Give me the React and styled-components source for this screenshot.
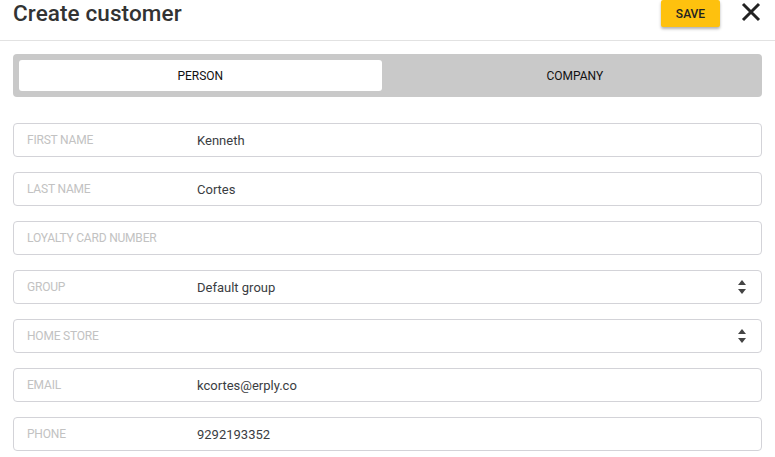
import React, { useState } from 'react'
import styled, { createGlobalStyle } from 'styled-components'

const GlobalStyle = createGlobalStyle`
  body {
    margin: 0;
    font-family: Roboto, 'Liberation Sans', sans-serif;
    background: #fff;
  }
`

const Page = styled.div`
  width: 775px;
`

const Header = styled.div`
  height: 40px;
  display: flex;
  align-items: flex-start;
  justify-content: space-between;
  padding: 0 13px;
  border-bottom: 1px solid #e2e2e2;
`

const Title = styled.h1`
  margin: 0;
  font-size: 22.5px;
  font-weight: 500;
  color: #333;
  letter-spacing: 0.1px;
`

const Actions = styled.div`
  display: flex;
  align-items: flex-start;
  gap: 20px;
`

const SaveButton = styled.button`
  width: 59px;
  height: 27px;
  border: none;
  border-radius: 2px;
  background: #fec10e;
  color: #222;
  font-family: inherit;
  font-size: 12px;
  font-weight: 500;
  box-shadow: 0 2px 3px rgba(0, 0, 0, 0.3);
  cursor: pointer;
`

const CloseButton = styled.button`
  border: none;
  background: transparent;
  padding: 0;
  margin-top: 1px;
  width: 22px;
  height: 22px;
  cursor: pointer;
`

const Content = styled.div`
  padding: 13px 13px 0;
`

const Tabs = styled.div`
  display: flex;
  gap: 12px;
  height: 43px;
  padding: 6px;
  box-sizing: border-box;
  background: #c9c9c9;
  border-radius: 4px;
  margin-bottom: 26px;
`

const Tab = styled.button`
  flex: 1;
  border: none;
  border-radius: 3px;
  background: ${p => (p.active ? '#fff' : 'transparent')};
  color: #111;
  font-family: inherit;
  font-size: 12px;
  cursor: pointer;
`

const Fields = styled.div`
  display: flex;
  flex-direction: column;
  gap: 15px;
`

const Field = styled.div`
  height: 34px;
  box-sizing: border-box;
  border: 1px solid #d3d3d8;
  border-radius: 4px;
  display: flex;
  align-items: center;
  padding: 0 14px 0 13px;
`

const Label = styled.span`
  width: 170px;
  flex-shrink: 0;
  font-size: 12px;
  color: #c2c2c2;
  letter-spacing: -0.2px;
`

const Value = styled.span`
  flex: 1;
  font-size: 13px;
  color: #3a3d42;
`

const Stepper = () => (
  <svg width="10" height="16" viewBox="0 0 10 16">
    <path d="M5 1 L9 6 L1 6 Z" fill="#444" />
    <path d="M1 10 L9 10 L5 15 Z" fill="#444" />
  </svg>
)

const fields = [
  { label: 'FIRST NAME', value: 'Kenneth' },
  { label: 'LAST NAME', value: 'Cortes' },
  { label: 'LOYALTY CARD NUMBER', value: '' },
  { label: 'GROUP', value: 'Default group', select: true },
  { label: 'HOME STORE', value: '', select: true },
  { label: 'EMAIL', value: 'kcortes@erply.co' },
  { label: 'PHONE', value: '9292193352' }
]

const App = () => {
  const [tab, setTab] = useState('person')
  return (
    <Page>
      <GlobalStyle />
      <Header>
        <Title>Create customer</Title>
        <Actions>
          <SaveButton>SAVE</SaveButton>
          <CloseButton aria-label='close'>
            <svg width='22' height='22' viewBox='0 0 22 22'>
              <path d='M3 3 L19 19 M19 3 L3 19' stroke='#222' strokeWidth='3' />
            </svg>
          </CloseButton>
        </Actions>
      </Header>
      <Content>
        <Tabs>
          <Tab active={tab === 'person'} onClick={() => setTab('person')}>PERSON</Tab>
          <Tab active={tab === 'company'} onClick={() => setTab('company')}>COMPANY</Tab>
        </Tabs>
        <Fields>
          {fields.map(f => (
            <Field key={f.label}>
              <Label>{f.label}</Label>
              <Value>{f.value}</Value>
              {f.select && <Stepper />}
            </Field>
          ))}
        </Fields>
      </Content>
    </Page>
  )
}

export default App
